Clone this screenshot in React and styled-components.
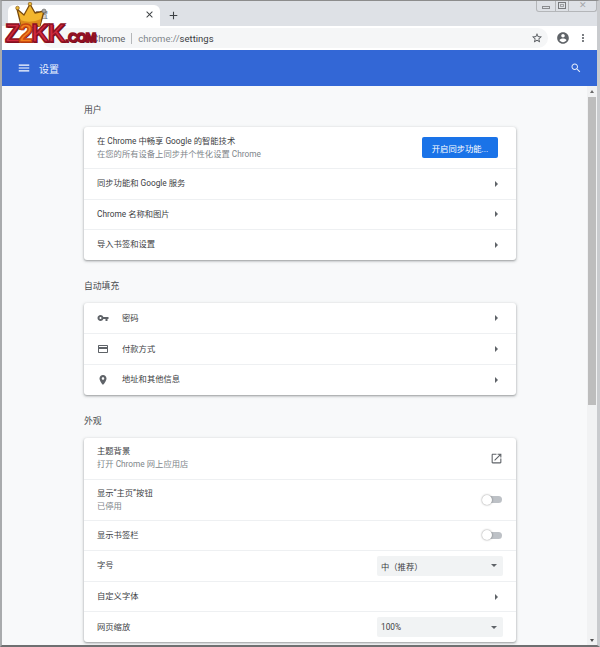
import React from "react";
import styled, { createGlobalStyle } from "styled-components";

const CJK = `Roboto, "Noto Sans CJK SC", sans-serif`;

const GlobalStyle = createGlobalStyle`
  html, body {
    margin: 0;
    padding: 0;
    overflow: hidden;
    background: #fff;
  }
  * {
    box-sizing: border-box;
  }
`;

const Icon = ({ d, size = 12, color = "#5f6368" }) => (
  <svg width={size} height={size} viewBox="0 0 24 24" fill={color}>
    <path d={d} />
  </svg>
);

const paths = {
  menu: "M3 18h18v-2H3v2zm0-5h18v-2H3v2zm0-7v2h18V6H3z",
  search: "M15.5 14h-.79l-.28-.27C15.41 12.59 16 11.11 16 9.5 16 5.91 13.09 3 9.5 3S3 5.91 3 9.5 5.91 16 9.5 16c1.61 0 3.09-.59 4.23-1.57l.27.28v.79l5 4.99L20.49 19l-4.99-5zm-6 0C7.01 14 5 11.99 5 9.5S7.01 5 9.5 5 14 7.01 14 9.5 11.99 14 9.5 14z",
  key: "M12.65 10C11.83 7.67 9.61 6 7 6c-3.31 0-6 2.69-6 6s2.69 6 6 6c2.61 0 4.83-1.67 5.65-4H17v4h4v-4h2v-4H12.65zM7 14c-1.1 0-2-.9-2-2s.9-2 2-2 2 .9 2 2-.9 2-2 2z",
  card: "M20 4H4c-1.11 0-1.99.89-1.99 2L2 18c0 1.11.89 2 2 2h16c1.11 0 2-.89 2-2V6c0-1.11-.89-2-2-2zm0 14H4v-6h16v6zm0-10H4V6h16v2z",
  place: "M12 2C8.13 2 5 5.13 5 9c0 5.25 7 13 7 13s7-7.75 7-13c0-3.87-3.13-7-7-7zm0 9.5c-1.38 0-2.5-1.12-2.5-2.5s1.12-2.5 2.5-2.5 2.5 1.12 2.5 2.5-1.12 2.5-2.5 2.5z",
  open: "M19 19H5V5h7V3H5c-1.11 0-2 .9-2 2v14c0 1.1.89 2 2 2h14c1.1 0 2-.9 2-2v-7h-2v7zM14 3v2h3.59l-9.83 9.83 1.41 1.41L19 6.41V10h2V3h-7z",
  account: "M12 2C6.48 2 2 6.48 2 12s4.48 10 10 10 10-4.48 10-10S17.52 2 12 2zm0 3c1.66 0 3 1.34 3 3s-1.34 3-3 3-3-1.34-3-3 1.34-3 3-3zm0 14.2c-2.5 0-4.71-1.28-6-3.22.03-1.99 4-3.08 6-3.08 1.99 0 5.97 1.09 6 3.08-1.29 1.94-3.5 3.22-6 3.22z",
  star: "M22 9.24l-7.19-.62L12 2 9.19 8.63 2 9.24l5.46 4.73L5.82 21 12 17.27 18.18 21l-1.63-7.03L22 9.24zM12 15.4l-3.76 2.27 1-4.28-3.32-2.88 4.38-.38L12 6.1l1.71 4.04 4.38.38-3.32 2.88 1 4.28L12 15.4z",
  more: "M12 8c1.1 0 2-.9 2-2s-.9-2-2-2-2 .9-2 2 .9 2 2 2zm0 2c-1.1 0-2 .9-2 2s.9 2 2 2 2-.9 2-2-.9-2-2-2zm0 6c-1.1 0-2 .9-2 2s.9 2 2 2 2-.9 2-2-.9-2-2-2z",
  close: "M19 6.41L17.59 5 12 10.59 6.41 5 5 6.41 10.59 12 5 17.59 6.41 19 12 13.41 17.59 19 19 17.59 13.41 12z",
  plus: "M19 13h-6v6h-2v-6H5v-2h6V5h2v6h6v2z",
};

const Window = styled.div`
  position: relative;
  width: 600px;
  height: 647px;
  display: flex;
  flex-direction: column;
  background: #dee1e6;
  border-top: 1px solid #8c8c8c;
  border-left: 2px solid #a9abad;
  border-right: 3px solid #c9cbce;
  border-bottom: 2px solid #6f7071;
  overflow: hidden;
  font-family: ${CJK};
`;

const TabStrip = styled.div`
  height: 25px;
  flex: none;
  display: flex;
  align-items: flex-end;
  padding-left: 6px;
  gap: 7px;
  position: relative;
`;

const Tab = styled.div`
  width: 152px;
  height: 21px;
  background: #fff;
  border-radius: 6px 6px 0 0;
  display: flex;
  align-items: center;
  justify-content: space-between;
  padding: 0 5px 3px 24px;
  font-size: 8px;
  color: #5f6368;
`;

const NewTab = styled.div`
  height: 21px;
  display: flex;
  align-items: center;
`;

const WindowButtons = styled.div`
  position: absolute;
  top: -1px;
  right: 0;
  display: flex;
  height: 12px;
  border: 1px solid #b4b6b9;
  border-top: none;
  border-radius: 0 0 3px 3px;
`;

const WindowButton = styled.div`
  width: ${(p) => p.$w}px;
  display: flex;
  align-items: center;
  justify-content: center;
  border-left: ${(p) => (p.$first ? "none" : "1px solid #b4b6b9")};
  font-size: 9px;
  line-height: 1;
  color: #a5a7aa;
`;

const MinBar = styled.span`
  width: 8px;
  height: 3px;
  border: 1px solid #8a8c8f;
  margin-top: 4px;
`;

const MaxBox = styled.span`
  width: 8px;
  height: 7px;
  border: 1px solid #77797c;
  box-shadow: inset 0 0 0 1px #dee1e6, inset 0 0 0 2px #a0a2a5;
`;

const Toolbar = styled.div`
  height: 24px;
  flex: none;
  background: #fff;
  display: flex;
  align-items: center;
  padding: 0 8px 0 40px;
`;

const Omnibox = styled.div`
  flex: 1;
  height: 20px;
  display: flex;
  align-items: center;
  padding: 0 5px 0 50px;
  border-radius: 10px;
  background: #f5f6f7;
  font-size: 9.5px;
`;

const Origin = styled.span`
  color: #5f6368;
`;

const UrlDivider = styled.span`
  width: 1px;
  height: 11px;
  margin: 0 6px;
  background: #b5b7ba;
`;

const UrlScheme = styled.span`
  color: #80868b;
`;

const UrlPath = styled.span`
  color: #3c4043;
`;

const StarSlot = styled.span`
  margin-left: auto;
  display: flex;
`;

const ToolbarIcons = styled.div`
  display: flex;
  align-items: center;
  margin-left: 8px;
  gap: 7px;
`;

const AppHeader = styled.header`
  height: 36px;
  flex: none;
  background: #3367d6;
  display: flex;
  align-items: center;
  padding: 0 15px;
  color: #fff;
`;

const HeaderTitle = styled.span`
  margin-left: 8px;
  font-size: 10px;
  color: #eef3fd;
`;

const HeaderSearch = styled.div`
  margin-left: auto;
  display: flex;
`;

const Body = styled.div`
  flex: 1;
  min-height: 0;
  display: flex;
  background: #f8f9fa;
`;

const Main = styled.main`
  flex: 1;
  min-width: 0;
  padding-left: 82px;
  overflow: hidden;
`;

const Section = styled.section`
  width: 432px;
`;

const SectionTitle = styled.h2`
  margin: 0;
  height: 41px;
  padding-top: 18px;
  font-size: 8.8px;
  line-height: 13px;
  font-weight: 400;
  color: #4a4d50;
`;

const Card = styled.div`
  background: #fff;
  border-radius: 3px;
  box-shadow: 0 1px 2px rgba(60, 64, 67, 0.4), 0 1px 3px 1px rgba(60, 64, 67, 0.12);
  margin-bottom: 2px;
`;

const Row = styled.div`
  height: ${(p) => p.$h || 30.6}px;
  display: flex;
  align-items: center;
  padding: 0 13px;
  border-top: ${(p) => (p.$first ? "none" : "1px solid #eef0f2")};
`;

const RowIcon = styled.span`
  width: 25px;
  flex: none;
  display: flex;
`;

const RowText = styled.div`
  flex: 1;
  min-width: 0;
`;

const Label = styled.div`
  font-size: 8.3px;
  line-height: 13px;
  color: #3c4043;
`;

const SubLabel = styled.div`
  font-size: 8.3px;
  line-height: 13px;
  color: #80868b;
`;

const Arrow = styled.span`
  width: 0;
  height: 0;
  margin-right: 5px;
  border-left: 3px solid #5f6368;
  border-top: 3px solid transparent;
  border-bottom: 3px solid transparent;
`;

const SyncButton = styled.button`
  width: 76px;
  height: 21px;
  margin-right: 5px;
  padding: 0;
  border: none;
  border-radius: 2px;
  background: #1a73e8;
  color: #fff;
  font-family: ${CJK};
  font-size: 8.3px;
`;

const ToggleWrap = styled.div`
  position: relative;
  width: 20px;
  height: 10px;
  margin-right: 1px;
  display: flex;
  align-items: center;
`;

const ToggleTrack = styled.span`
  width: 17px;
  height: 7px;
  margin-left: 3px;
  border-radius: 4px;
  background: #bdc1c6;
`;

const ToggleThumb = styled.span`
  position: absolute;
  left: 0;
  top: 0;
  width: 10px;
  height: 10px;
  border-radius: 50%;
  background: #fff;
  box-shadow: 0 0 2px rgba(0, 0, 0, 0.5);
`;

const Select = styled.div`
  width: 126px;
  height: 20px;
  display: flex;
  align-items: center;
  justify-content: space-between;
  padding: 0 6px 0 4px;
  border-radius: 2px;
  background: #f1f3f4;
  font-size: 8.3px;
  color: #3c4043;
`;

const SelectArrow = styled.span`
  width: 0;
  height: 0;
  border-top: 3px solid #5f6368;
  border-left: 3.5px solid transparent;
  border-right: 3.5px solid transparent;
`;

const Scrollbar = styled.div`
  width: 10px;
  flex: none;
  display: flex;
  flex-direction: column;
  align-items: center;
  background: #f1f2f3;
`;

const ScrollArrow = styled.span`
  margin: ${(p) => (p.$down ? "auto 0 3px" : "4px 0 0")};
  width: 0;
  height: 0;
  border-left: 2.5px solid transparent;
  border-right: 2.5px solid transparent;
  border-bottom: ${(p) => (p.$down ? "none" : "3px solid #6a6a6a")};
  border-top: ${(p) => (p.$down ? "3px solid #505050" : "none")};
`;

const ScrollThumb = styled.div`
  width: 8px;
  height: 308px;
  margin-top: 4px;
  background: #bdbdbd;
`;

/* site watermark that sits on top of the tab strip */
const Watermark = styled.div`
  position: absolute;
  left: 2px;
  top: 0;
  width: 94px;
  height: 46px;
  pointer-events: none;
`;

const Crown = styled.svg`
  position: absolute;
  left: 11px;
  top: 1px;
`;

const MarkText = styled.div`
  position: absolute;
  left: 1px;
  top: 19px;
  white-space: nowrap;
  font-family: "Liberation Sans", sans-serif;
  font-weight: 700;
  line-height: 26px;
  color: #bd1a30;
  -webkit-text-stroke: 1.4px #8f1022;
  text-shadow: 1px 1px 0 #5b0a16;
`;

const MarkBig = styled.span`
  font-size: 25px;
  letter-spacing: -1.5px;
  color: ${(p) => p.$color || "#d12a3e"};
  -webkit-text-stroke-color: ${(p) => p.$stroke || "#8f1022"};
`;

const MarkSmall = styled.span`
  font-size: 13px;
  letter-spacing: -1px;
  margin-left: 1px;
`;

const ArrowRow = ({ first, children, icon }) => (
  <Row $first={first}>
    {icon && (
      <RowIcon>
        <Icon d={paths[icon]} />
      </RowIcon>
    )}
    <RowText>
      <Label>{children}</Label>
    </RowText>
    <Arrow />
  </Row>
);

const Toggle = () => (
  <ToggleWrap>
    <ToggleTrack />
    <ToggleThumb />
  </ToggleWrap>
);

export default function App() {
  return (
    <>
      <GlobalStyle />
      <Window>
        <TabStrip>
          <Tab>
            <span>设置</span>
            <Icon d={paths.close} size={11} color="#3c4043" />
          </Tab>
          <NewTab>
            <Icon d={paths.plus} size={13} color="#3c4043" />
          </NewTab>
          <WindowButtons>
            <WindowButton $w={18} $first>
              <MinBar />
            </WindowButton>
            <WindowButton $w={13}>
              <MaxBox />
            </WindowButton>
            <WindowButton $w={28}>✕</WindowButton>
          </WindowButtons>
        </TabStrip>

        <Toolbar>
          <Omnibox>
            <Origin>Chrome</Origin>
            <UrlDivider />
            <UrlScheme>chrome://</UrlScheme>
            <UrlPath>settings</UrlPath>
            <StarSlot>
              <Icon d={paths.star} size={12} color="#4d5156" />
            </StarSlot>
          </Omnibox>
          <ToolbarIcons>
            <Icon d={paths.account} size={14} color="#5f6368" />
            <Icon d={paths.more} size={12} color="#5f6368" />
          </ToolbarIcons>
        </Toolbar>

        <AppHeader>
          <Icon d={paths.menu} size={14} color="#fff" />
          <HeaderTitle>设置</HeaderTitle>
          <HeaderSearch>
            <Icon d={paths.search} size={12} color="#e6edfb" />
          </HeaderSearch>
        </AppHeader>

        <Body>
          <Main>
            <Section>
              <SectionTitle>用户</SectionTitle>
              <Card>
                <Row $first $h={41}>
                  <RowText>
                    <Label>在 Chrome 中畅享 Google 的智能技术</Label>
                    <SubLabel>在您的所有设备上同步并个性化设置 Chrome</SubLabel>
                  </RowText>
                  <SyncButton>开启同步功能...</SyncButton>
                </Row>
                <ArrowRow>同步功能和 Google 服务</ArrowRow>
                <ArrowRow>Chrome 名称和图片</ArrowRow>
                <ArrowRow>导入书签和设置</ArrowRow>
              </Card>
            </Section>

            <Section>
              <SectionTitle>自动填充</SectionTitle>
              <Card>
                <ArrowRow first icon="key">密码</ArrowRow>
                <ArrowRow icon="card">付款方式</ArrowRow>
                <ArrowRow icon="place">地址和其他信息</ArrowRow>
              </Card>
            </Section>

            <Section>
              <SectionTitle>外观</SectionTitle>
              <Card>
                <Row $first $h={41}>
                  <RowText>
                    <Label>主题背景</Label>
                    <SubLabel>打开 Chrome 网上应用店</SubLabel>
                  </RowText>
                  <Icon d={paths.open} size={13} />
                </Row>
                <Row $h={41}>
                  <RowText>
                    <Label>显示“主页”按钮</Label>
                    <SubLabel>已停用</SubLabel>
                  </RowText>
                  <Toggle />
                </Row>
                <Row>
                  <RowText>
                    <Label>显示书签栏</Label>
                  </RowText>
                  <Toggle />
                </Row>
                <Row>
                  <RowText>
                    <Label>字号</Label>
                  </RowText>
                  <Select>
                    <span>中（推荐）</span>
                    <SelectArrow />
                  </Select>
                </Row>
                <ArrowRow>自定义字体</ArrowRow>
                <Row>
                  <RowText>
                    <Label>网页缩放</Label>
                  </RowText>
                  <Select>
                    <span>100%</span>
                    <SelectArrow />
                  </Select>
                </Row>
              </Card>
            </Section>
          </Main>
          <Scrollbar>
            <ScrollArrow />
            <ScrollThumb />
            <ScrollArrow $down />
          </Scrollbar>
        </Body>

        <Watermark>
          <Crown width="34" height="26" viewBox="0 0 34 26">
            <path d="M2 7 L9 13 L15 2 L20 11 L29 9 L25 24 Q15 27 6 23 Z" fill="#f3b62e" stroke="#7a4a0c" strokeWidth="1.3" strokeLinejoin="round" />
            <path d="M5 18 Q15 22 26 17 L25 24 Q15 27 6 23 Z" fill="#dd8a1b" />
            <circle cx="2.5" cy="6" r="1.8" fill="#e9b93a" stroke="#7a4a0c" strokeWidth="0.6" />
            <circle cx="15" cy="2" r="1.8" fill="#e9b93a" stroke="#7a4a0c" strokeWidth="0.6" />
            <circle cx="29" cy="9" r="2" fill="#a5a5a5" stroke="#5e5e5e" strokeWidth="0.6" />
          </Crown>
          <MarkText>
            <MarkBig>Z</MarkBig>
            <MarkBig $color="#f5821f" $stroke="#c9480f">2</MarkBig>
            <MarkBig>KK</MarkBig>
            <MarkSmall>.COM</MarkSmall>
          </MarkText>
        </Watermark>
      </Window>
    </>
  );
}
